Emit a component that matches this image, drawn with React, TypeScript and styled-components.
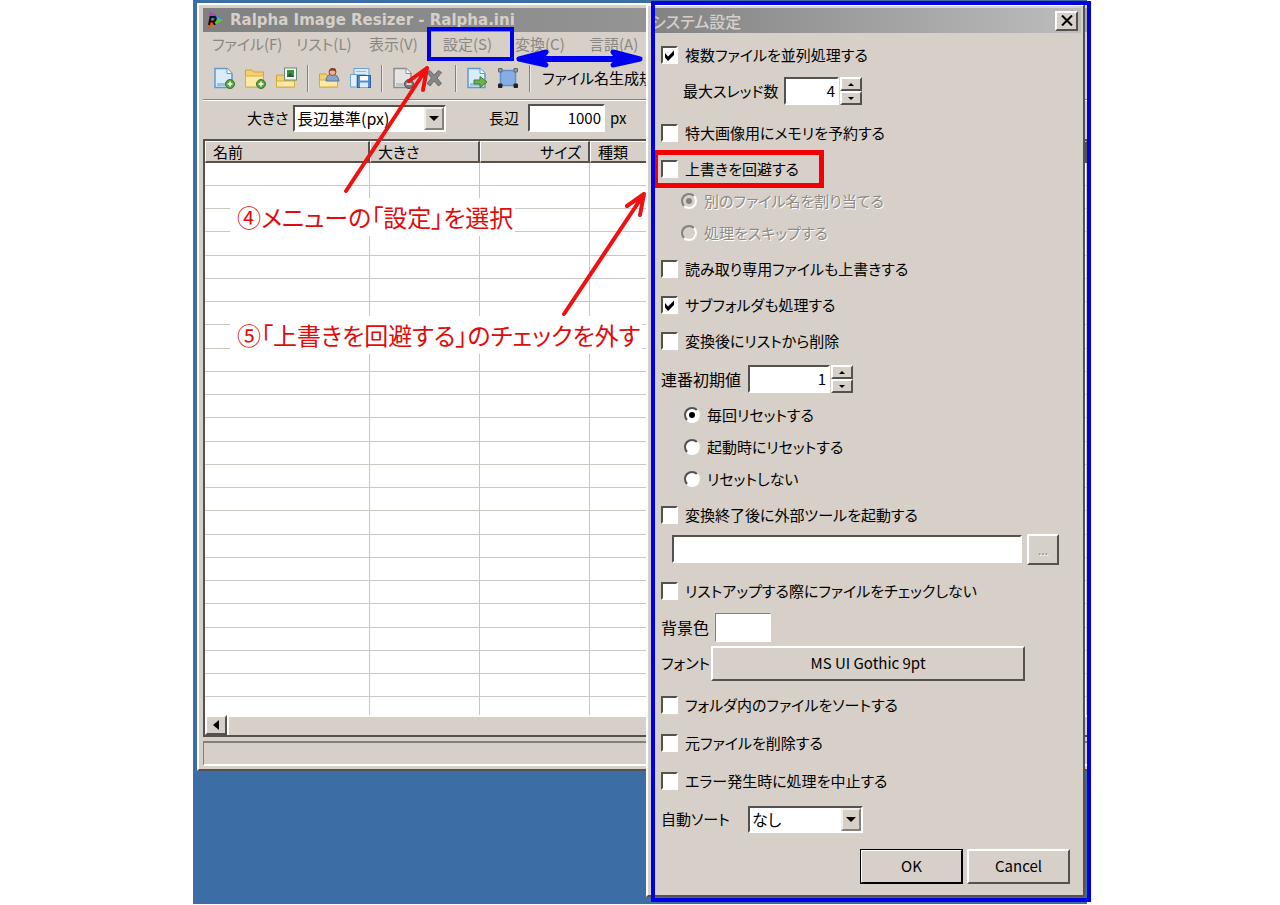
import React, { useId, useState } from "react";
import styled, { createGlobalStyle, css } from "styled-components";

const face = "#d6d0c8";
const shade = "#84807a";
const dark = "#55524e";
const light = "#ffffff";

const GlobalStyle = createGlobalStyle`
  * { box-sizing: border-box; }
  body {
    margin: 0;
    background: #fff;
    font-family: "Noto Sans CJK JP", sans-serif;
    font-size: 15px;
    line-height: 24px;
    font-feature-settings: "palt";
    color: #000;
  }
  button, input, select {
    font: inherit;
    font-feature-settings: inherit;
    color: inherit;
    margin: 0;
    padding: 0;
    border-radius: 0;
  }
`;

const raised = css`
  border: 2px solid;
  border-color: ${light} ${dark} ${dark} ${light};
  background: ${face};
`;

const sunken = css`
  border: 2px solid;
  border-color: ${dark} ${light} ${light} ${dark};
  background: #fff;
`;

const Desktop = styled.main`
  position: relative;
  display: grid;
  align-items: start;
  width: 100%;
  max-width: 894px;
  margin: 0 auto;
  padding: 3px 0 7px 4px;
  background: #3c6ea5;
`;

const MainWindow = styled.section`
  grid-area: 1 / 1;
  min-width: 0;
  padding: 3px 0 3px 4px;
  border: solid;
  border-width: 2px 0 2px 2px;
  border-color: ${light} ${dark} ${dark} ${light};
  background: ${face};
`;

const TitleBar = styled.header`
  display: flex;
  align-items: center;
  gap: 6px;
  height: 24px;
  padding: 0 3px;
  background: linear-gradient(90deg, #808080, #a8a8a8);
  color: ${face};
`;

const Title = styled.h1`
  margin: 0;
  font-family: "DejaVu Sans", sans-serif;
  font-size: 15px;
  line-height: 24px;
  font-weight: 700;
  white-space: nowrap;
`;

const MenuBar = styled.nav`
  display: grid;
  grid-template-columns: 84px 73px 74px 72px 74px 74px;
  height: 24px;
  padding-left: 9px;
  margin-bottom: 1px;
`;

const MenuItem = styled.button<{ $marked?: boolean }>`
  position: relative;
  border: 0;
  background: none;
  color: #8a8782;
  text-align: left;
  line-height: 24px;
  white-space: nowrap;
  ${(p) =>
    p.$marked &&
    css`
      &::after {
        content: "";
        position: absolute;
        inset: -5px 1px -5px -16px;
        border: 4px solid #0000e6;
      }
    `}
`;

const Toolbar = styled.div`
  display: flex;
  align-items: center;
  height: 43px;
  padding-left: 5px;
  border-bottom: 1px solid ${shade};
  white-space: nowrap;
`;

const ToolButton = styled.button`
  flex: none;
  display: grid;
  place-items: center;
  width: 31px;
  height: 30px;
  border: 0;
  background: none;
`;

const ToolSeparator = styled.span`
  flex: none;
  width: 2px;
  height: 27px;
  margin: 0 4px 0 6px;
  border-left: 1px solid ${shade};
  border-right: 1px solid #eceae6;
`;

const ToolText = styled.span`
  padding-left: 7px;
`;

const Options = styled.div`
  display: flex;
  align-items: center;
  height: 39px;
  padding: 0 0 4px 44px;
  border-top: 1px solid ${light};
`;

const OptionLabel = styled.label<{ $width: number; $inset?: number }>`
  width: ${(p) => p.$width}px;
  padding-left: ${(p) => p.$inset ?? 0}px;
  white-space: nowrap;
`;

const Unit = styled.span`
  padding-left: 5px;
`;

const SelectFrame = styled.span<{ $width: number }>`
  ${sunken}
  display: grid;
  grid-template-columns: 1fr 20px;
  flex: none;
  width: ${(p) => p.$width}px;
  height: 27px;
`;

const NativeSelect = styled.select`
  grid-area: 1 / 1 / 2 / 3;
  appearance: none;
  border: 0;
  padding: 0 20px 0 2px;
  background: transparent;
  font-size: 16px;
  line-height: 23px;
`;

const DropArrow = styled.span`
  ${raised}
  border-color: #f1efec ${shade} ${shade} #f1efec;
  grid-area: 1 / 2;
  display: grid;
  place-items: center;
  pointer-events: none;
`;

const TextInput = styled.input<{ $width?: number }>`
  ${sunken}
  ${(p) => (p.$width ? css`width: ${p.$width}px; flex: none;` : css`flex: 1; min-width: 0;`)}
  height: 28px;
  padding: 0 2px 2px;
  text-align: right;
  line-height: 22px;
`;

const ListPane = styled.div`
  border: solid;
  border-width: 2px 0 2px 2px;
  border-color: ${dark} ${light} ${dark} ${dark};
  background: #fff;
`;

const FileTable = styled.table`
  width: 100%;
  table-layout: fixed;
  border-collapse: separate;
  border-spacing: 0;
`;

const HeadCell = styled.th<{ $width?: number; $end?: boolean }>`
  ${(p) => p.$width && `width: ${p.$width}px;`}
  height: 22px;
  padding: 0 7px;
  border: solid;
  border-width: 1px 2px 2px 1px;
  border-color: ${light} ${dark} ${dark} ${light};
  background: ${face};
  font-weight: 400;
  line-height: 19px;
  text-align: ${(p) => (p.$end ? "right" : "left")};
`;

const FileRow = styled.tr`
  height: 23px;
  &:nth-child(4n) { height: 24px; }
  &:last-child { height: 18px; }
  &:last-child > td { border-bottom: 0; }
`;

const FileCell = styled.td`
  padding: 0;
  border-right: 1px solid #c9c8c0;
  border-bottom: 1px solid #c9c8c0;
`;

const ScrollBar = styled.div`
  display: flex;
  height: 20px;
`;

const ScrollButton = styled.button`
  ${raised}
  display: grid;
  place-items: center;
  width: 22px;
`;

const ScrollThumb = styled.div`
  ${raised}
  border-right: 0;
  border-bottom: 0;
  flex: 1;
`;

const StatusBar = styled.footer`
  height: 25px;
  margin-top: 4px;
  border: solid;
  border-width: 2px 0 2px 1px;
  border-color: ${shade} ${light} ${light} ${shade};
`;

const Dialog = styled.section`
  position: relative;
  grid-area: 1 / 1;
  justify-self: end;
  width: 439px;
  margin: 1px 2px 0 0;
  padding: 2px 2px 17px 3px;
  border: 2px solid;
  border-color: ${light} ${dark} ${dark} ${light};
  background: ${face};
`;

const DialogTitle = styled(TitleBar)`
  justify-content: space-between;
  height: 25px;
  padding: 0 3px 0 0;
  background: linear-gradient(90deg, #828282, #bdbdbd);
`;

const DialogHeading = styled.h2`
  margin: 0;
  font-size: 16px;
  line-height: 24px;
  font-weight: 500;
`;

const CloseButton = styled.button`
  ${raised}
  display: grid;
  place-items: center;
  width: 23px;
  height: 20px;
`;

const DialogBody = styled.form`
  padding: 10px 11px 0 10px;
`;

const Row = styled.div<{ $gap?: number; $indent?: number; $end?: boolean }>`
  position: relative;
  display: flex;
  align-items: center;
  justify-content: ${(p) => (p.$end ? "flex-end" : "flex-start")};
  height: 24px;
  margin-top: ${(p) => p.$gap ?? 12}px;
  padding-left: ${(p) => p.$indent ?? 0}px;
  white-space: nowrap;
`;

const RedMark = styled.span`
  position: absolute;
  top: -7px;
  left: -8px;
  width: 171px;
  height: 38px;
  border: 5px solid #f40000;
  pointer-events: none;
`;

const ChoiceLabel = styled.label<{ $disabled?: boolean }>`
  display: flex;
  align-items: center;
  gap: 7px;
  ${(p) =>
    p.$disabled &&
    css`
      color: #8e8a84;
      text-shadow: 1px 1px 0 #fff;
    `}
`;

const Mark = styled.span`
  display: grid;
  place-items: center;
  & > * { grid-area: 1 / 1; }
  & > svg { pointer-events: none; }
`;

const CheckInput = styled.input`
  ${sunken}
  appearance: none;
  width: 17px;
  height: 18px;
`;

const RadioInput = styled.input`
  ${sunken}
  appearance: none;
  width: 16px;
  height: 16px;
  border-radius: 50%;
  &:disabled { background: ${face}; border-color: ${shade} ${light} ${light} ${shade}; }
`;

const FieldLabel = styled.label<{ $width: number; $large?: boolean }>`
  flex: none;
  width: ${(p) => p.$width}px;
  ${(p) => p.$large && "font-size: 16px;"}
`;

const Spinner = styled.span`
  display: grid;
  grid-template-rows: 14px 14px;
  width: 22px;
  margin-left: 1px;
`;

const SpinButton = styled.button`
  ${raised}
  display: grid;
  place-items: center;
`;

const PushButton = styled.button<{ $width: number; $default?: boolean; $faded?: boolean }>`
  ${raised}
  flex: none;
  width: ${(p) => p.$width}px;
  height: 35px;
  line-height: 28px;
  ${(p) => p.$default && `outline: 1px solid #000; outline-offset: -1px; border-color: ${light} #000 #000 ${light};`}
  ${(p) => p.$faded && `height: 31px; color: #8e8a84; font-size: 12px; text-shadow: 1px 1px 0 #fff;`}
`;

const Swatch = styled.button`
  width: 56px;
  height: 29px;
  border: 1px solid;
  border-color: ${shade} ${light} ${light} ${shade};
  background: #fff;
`;

const ToolPath = styled.div`
  display: flex;
  flex: 1;
  align-items: center;
  gap: 5px;
  padding-right: 11px;
`;

const ButtonPair = styled.div`
  display: flex;
  gap: 4px;
`;

const DialogOutline = styled.div`
  position: absolute;
  inset: -5px -8px -7px 3px;
  border: 4px solid #0000e6;
  pointer-events: none;
`;

const Note = styled.p<{ $top: number }>`
  position: absolute;
  top: ${(p) => p.$top}px;
  left: 37px;
  margin: 0;
  padding: 0 2px 0 7px;
  background: #fff;
  color: #e00c0c;
  font-size: 24px;
  line-height: 38px;
  white-space: nowrap;
`;

const Arrows = styled.svg`
  position: absolute;
  top: 0;
  left: 0;
  pointer-events: none;
`;

const Triangle = ({ points, w, h }: { points: string; w: number; h: number }) => (
  <svg width={w} height={h} viewBox={`0 0 ${w} ${h}`} aria-hidden>
    <polygon points={points} fill="#000" />
  </svg>
);

function Check({ label, checked = false }: { label: string; checked?: boolean }) {
  const [on, setOn] = useState(checked);
  return (
    <ChoiceLabel>
      <Mark>
        <CheckInput type="checkbox" checked={on} onChange={() => setOn(!on)} />
        {on && (
          <svg width="13" height="13" viewBox="0 0 13 13" aria-hidden>
            <path d="M2 4 L5 7.500 L11 1.500 V6 L5 12 L2 8.500 Z" fill="#000" />
          </svg>
        )}
      </Mark>
      {label}
    </ChoiceLabel>
  );
}

function Radio(props: { label: string; name: string; checked: boolean; disabled?: boolean; onPick?: () => void }) {
  return (
    <ChoiceLabel $disabled={props.disabled}>
      <Mark>
        <RadioInput
          type="radio"
          name={props.name}
          checked={props.checked}
          disabled={props.disabled}
          onChange={() => props.onPick?.()}
        />
        {props.checked && (
          <svg width="6" height="6" viewBox="0 0 6 6" aria-hidden>
            <circle cx="3" cy="3" r="3" fill={props.disabled ? shade : "#000"} />
          </svg>
        )}
      </Mark>
      {props.label}
    </ChoiceLabel>
  );
}

function NumberField(props: { label: string; labelWidth: number; large?: boolean; width: number; initial: number }) {
  const id = useId();
  const [value, setValue] = useState(props.initial);
  return (
    <>
      <FieldLabel htmlFor={id} $width={props.labelWidth} $large={props.large}>{props.label}</FieldLabel>
      <TextInput
        id={id}
        $width={props.width}
        inputMode="numeric"
        value={value}
        onChange={(e) => setValue(Number(e.target.value) || 0)}
      />
      <Spinner>
        <SpinButton type="button" aria-label="増やす" onClick={() => setValue(value + 1)}>
          <Triangle w={6} h={3} points="3,0 6,3 0,3" />
        </SpinButton>
        <SpinButton type="button" aria-label="減らす" onClick={() => setValue(value - 1)}>
          <Triangle w={6} h={3} points="0,0 6,0 3,3" />
        </SpinButton>
      </Spinner>
    </>
  );
}

function DropDown({ id, width, options }: { id: string; width: number; options: string[] }) {
  return (
    <SelectFrame $width={width}>
      <NativeSelect id={id}>
        {options.map((o) => (
          <option key={o}>{o}</option>
        ))}
      </NativeSelect>
      <DropArrow>
        <Triangle w={10} h={5} points="0,0 10,0 5,5" />
      </DropArrow>
    </SelectFrame>
  );
}

const Page = ({ gray }: { gray?: boolean }) => (
  <>
    <path
      d="M2 1.500 H14 L19 6.500 V20.500 H2 Z"
      fill={gray ? "#e4e4e4" : "#d8ecfb"}
      stroke={gray ? "#8c8c8c" : "#5c9bd0"}
      strokeWidth="1.500"
    />
    <path d="M14 1.500 V6.500 H19" fill="#fff" stroke={gray ? "#8c8c8c" : "#5c9bd0"} />
    <path d="M4 16 H17 V19 H4 Z" fill={gray ? "#c4c4c4" : "#93c5ec"} />
  </>
);

const Plus = () => (
  <>
    <circle cx="17" cy="17" r="4.500" fill="#5d9e3c" stroke="#3c7a25" />
    <path d="M17 14.500 V19.500 M14.500 17 H19.500" stroke="#fff" strokeWidth="1.500" />
  </>
);

const Folder = ({ y = 5 }: { y?: number }) => (
  <>
    <path d={`M1.500 20 V${y + 1} H8 L10 ${y + 3} H19.500 V20 Z`} fill="#f2d06b" stroke="#cfa23c" />
    <path d={`M1.500 20 V${y + 7} H19.500 V20 Z`} fill="#fbe9a4" stroke="#d7ad48" />
  </>
);

const icons: Record<string, React.ReactNode> = {
  newFile: (<><Page /><Plus /></>),
  addFolder: (<><Folder y={2} /><Plus /></>),
  folderImage: (
    <>
      <Folder y={7} />
      <rect x="9.500" y="1" width="12" height="12" fill="#f4f8f4" stroke="#6c8a78" />
      <rect x="12" y="3" width="7" height="7" fill="#3f8d45" />
      <path d="M12 10 L15 6 L19 10 Z" fill="#1f5d3a" />
    </>
  ),
  folderUser: (
    <>
      <Folder y={6} />
      <path d="M8 13 Q9 7 14 7 Q20 7 21 14 H8 Z" fill="#8aa4c8" stroke="#5d7598" />
      <circle cx="14.500" cy="5" r="3.500" fill="#e8b48c" stroke="#8a4a2c" />
      <path d="M11 4.500 Q12 0.500 15 1 Q18.500 1 18 5 Q15 2.500 11 4.500 Z" fill="#8f3a28" />
    </>
  ),
  saveList: (
    <>
      <path d="M5 1.500 H20 V14 H5 Z" fill="#d8ecfb" stroke="#6ba2d2" />
      <path d="M7 4.500 H17 M5 7.500 H17" stroke="#8dbbe0" />
      <path d="M1.500 7.500 H8 V20 H1.500 Z" fill="#e6f1fb" stroke="#6ba2d2" />
      <rect x="8.500" y="8.500" width="13" height="12" fill="#4f8dcb" stroke="#2b62a0" />
      <rect x="11" y="9" width="8" height="4.500" fill="#fff" />
      <rect x="11" y="15.500" width="8" height="5" fill="#dce8f4" />
    </>
  ),
  removeFile: (
    <>
      <Page gray />
      <circle cx="17" cy="17" r="4.500" fill="#777" stroke="#555" />
      <path d="M14.500 17 H19.500" stroke="#fff" strokeWidth="1.500" />
    </>
  ),
  clear: (
    <path d="M4 5.500 L7 3.500 L11 8 L15.500 3.500 L18.500 5.500 L14 11 L18.500 16.500 L15.500 19 L11 14 L7 19 L4 16.500 L8.500 11 Z" fill="#858585" stroke="#6c6c6c" />
  ),
  convert: (
    <>
      <Page />
      <path d="M8 13 H14 V9.500 L21 15 L14 20.500 V17 H8 Z" fill="#6fb04a" stroke="#3f7f28" />
    </>
  ),
  resize: (
    <>
      <rect x="3.500" y="3.500" width="15" height="15" fill="#86aee4" stroke="#5c8fd0" strokeWidth="1.500" />
      <path d="M1.500 1.500 h3.500 v3.500 h-3.500 Z M17 1.500 h3.500 v3.500 h-3.500 Z" fill="#999" stroke="#666" />
      <path d="M1.500 17 h3.500 v3.500 h-3.500 Z M17 17 h3.500 v3.500 h-3.500 Z" fill="#222" stroke="#222" />
    </>
  ),
};

const toolGroups = [
  [["newFile", "ファイルを追加"], ["addFolder", "フォルダを追加"], ["folderImage", "出力先"]],
  [["folderUser", "リストを開く"], ["saveList", "リストを保存"]],
  [["removeFile", "リストから削除"], ["clear", "クリア"]],
  [["convert", "変換"], ["resize", "サイズ変更"]],
];

const AppLogo = () => (
  <svg width="18" height="18" viewBox="0 0 18 18" aria-hidden>
    <path d="M3 0.500 L17.500 9 L9 12 Z" fill="#3b5fd8" />
    <path d="M3 0.500 L9 4 L4 10 Z" fill="#c83ac0" />
    <path d="M10 5 L17.500 9 L12 11 Z" fill="#35b8d8" />
    <path d="M2 17.500 L3 9 L17.500 9 Z" fill="#e8542c" />
    <path d="M6 16 L17.500 9 L10 9 Z" fill="#62c03a" />
    <path d="M3 14 L4.500 6 H8 Q10.500 6 9.500 8.500 Q9 10.500 7 10.500 H4 M7 10.500 L9 14" fill="none" stroke="#111" strokeWidth="2" />
  </svg>
);

const menus = ["ファイル(F)", "リスト(L)", "表示(V)", "設定(S)", "変換(C)", "言語(A)"];
const resets = ["毎回リセットする", "起動時にリセットする", "リセットしない"];

function RalphaWindow() {
  return (
    <MainWindow>
      <TitleBar>
        <AppLogo />
        <Title>Ralpha Image Resizer - Ralpha.ini</Title>
      </TitleBar>
      <MenuBar>
        {menus.map((m) => (
          <MenuItem key={m} type="button" $marked={m === "設定(S)"}>{m}</MenuItem>
        ))}
      </MenuBar>
      <Toolbar>
        {toolGroups.map((group, i) => (
          <React.Fragment key={i}>
            {group.map(([icon, name]) => (
              <ToolButton key={icon} type="button" aria-label={name}>
                <svg width="22" height="22" viewBox="0 0 22 22" aria-hidden>{icons[icon]}</svg>
              </ToolButton>
            ))}
            <ToolSeparator />
          </React.Fragment>
        ))}
        <ToolText>ファイル名生成規</ToolText>
      </Toolbar>
      <Options>
        <OptionLabel htmlFor="size-mode" $width={46}>大きさ</OptionLabel>
        <DropDown id="size-mode" width={153} options={["長辺基準(px)"]} />
        <OptionLabel htmlFor="long-side" $width={82} $inset={43}>長辺</OptionLabel>
        <TextInput id="long-side" $width={77} defaultValue="1000" />
        <Unit>px</Unit>
      </Options>
      <ListPane>
        <FileTable>
          <thead>
            <tr>
              <HeadCell $width={165}>名前</HeadCell>
              <HeadCell $width={110}>大きさ</HeadCell>
              <HeadCell $width={110} $end>サイズ</HeadCell>
              <HeadCell>種類</HeadCell>
            </tr>
          </thead>
          <tbody>
            {Array.from({ length: 24 }, (_, r) => (
              <FileRow key={r}>
                {menus.slice(0, 4).map((m) => (
                  <FileCell key={m} />
                ))}
              </FileRow>
            ))}
          </tbody>
        </FileTable>
        <ScrollBar>
          <ScrollButton type="button" aria-label="左へ">
            <Triangle w={6} h={10} points="6,0 6,10 0,5" />
          </ScrollButton>
          <ScrollThumb />
        </ScrollBar>
      </ListPane>
      <StatusBar />
    </MainWindow>
  );
}

function SettingsDialog() {
  const [reset, setReset] = useState(0);
  return (
    <Dialog role="dialog" aria-labelledby="settings-title">
      <DialogTitle>
        <DialogHeading id="settings-title">システム設定</DialogHeading>
        <CloseButton type="button" aria-label="閉じる">
          <svg width="12" height="11" viewBox="0 0 12 11" aria-hidden>
            <path d="M1 0.500 L11 10.500 M11 0.500 L1 10.500" stroke="#000" strokeWidth="2" />
          </svg>
        </CloseButton>
      </DialogTitle>
      <DialogBody onSubmit={(e) => e.preventDefault()}>
        <Row $gap={0}><Check label="複数ファイルを並列処理する" checked /></Row>
        <Row $indent={22}><NumberField label="最大スレッド数" labelWidth={101} width={55} initial={4} /></Row>
        <Row $gap={18}><Check label="特大画像用にメモリを予約する" /></Row>
        <Row><Check label="上書きを回避する" /><RedMark /></Row>
        <Row $gap={8} $indent={20}><Radio name="avoid" label="別のファイル名を割り当てる" checked disabled /></Row>
        <Row $gap={8} $indent={20}><Radio name="avoid" label="処理をスキップする" checked={false} disabled /></Row>
        <Row><Check label="読み取り専用ファイルも上書きする" /></Row>
        <Row><Check label="サブフォルダも処理する" checked /></Row>
        <Row><Check label="変換後にリストから削除" /></Row>
        <Row $gap={14}><NumberField label="連番初期値" labelWidth={87} large width={82} initial={1} /></Row>
        {resets.map((label, i) => (
          <Row key={label} $gap={i ? 8 : 12} $indent={23}>
            <Radio name="reset" label={label} checked={reset === i} onPick={() => setReset(i)} />
          </Row>
        ))}
        <Row><Check label="変換終了後に外部ツールを起動する" /></Row>
        <Row $gap={10} $indent={11}>
          <ToolPath>
            <TextInput aria-label="外部ツール" />
            <PushButton type="button" $width={32} $faded disabled>...</PushButton>
          </ToolPath>
        </Row>
        <Row $gap={18}><Check label="リストアップする際にファイルをチェックしない" /></Row>
        <Row>
          <FieldLabel htmlFor="back-color" $width={54} $large>背景色</FieldLabel>
          <Swatch id="back-color" type="button" />
        </Row>
        <Row>
          <FieldLabel htmlFor="font-button" $width={50}>フォント</FieldLabel>
          <PushButton id="font-button" type="button" $width={314}>MS UI Gothic 9pt</PushButton>
        </Row>
        <Row $gap={18}><Check label="フォルダ内のファイルをソートする" /></Row>
        <Row $gap={14}><Check label="元ファイルを削除する" /></Row>
        <Row $gap={14}><Check label="エラー発生時に処理を中止する" /></Row>
        <Row $gap={14}>
          <FieldLabel htmlFor="auto-sort" $width={87}>自動ソート</FieldLabel>
          <DropDown id="auto-sort" width={115} options={["なし"]} />
        </Row>
        <Row $gap={23} $end>
          <ButtonPair>
            <PushButton type="submit" $width={103} $default>OK</PushButton>
            <PushButton type="button" $width={103}>Cancel</PushButton>
          </ButtonPair>
        </Row>
      </DialogBody>
      <DialogOutline />
    </Dialog>
  );
}

export default function App() {
  return (
    <>
      <GlobalStyle />
      <Desktop>
        <RalphaWindow />
        <SettingsDialog />
        <Note $top={198}>④メニューの「設定」を選択</Note>
        <Note $top={316}>⑤「上書きを回避する」のチェックを外す</Note>
        <Arrows width="460" height="330" viewBox="0 0 460 330" fill="none" strokeLinecap="round" aria-hidden>
          <g stroke="#0000f0" strokeWidth="5" strokeLinejoin="round">
            <path d="M330 59 H444" strokeWidth="6" />
            <path d="M353 52 L326 59 L353 65 L347 59 Z" fill="#0000f0" />
            <path d="M420 52 L447 59 L420 65 L426 59 Z" fill="#0000f0" />
          </g>
          <g stroke="#f01010" strokeWidth="4" strokeLinejoin="round">
            <path d="M153 191 L234 68 M216 81 L234 68 L230 90" />
            <path d="M371 314 L451 194 M434 206 L451 194 L447 215" />
          </g>
        </Arrows>
      </Desktop>
    </>
  );
}
